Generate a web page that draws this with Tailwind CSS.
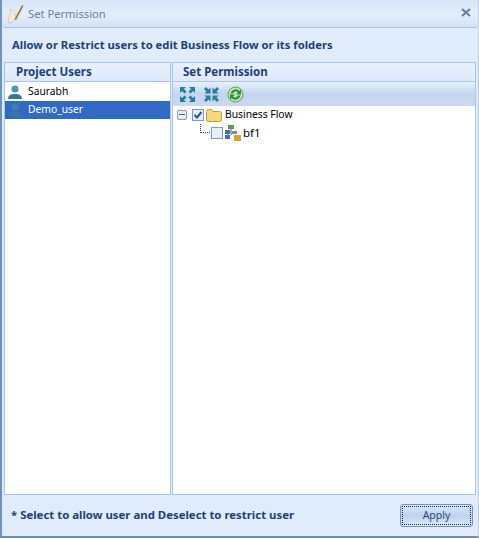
<!doctype html>
<html><head><meta charset="utf-8"><script src="https://cdn.jsdelivr.net/npm/@tailwindcss/browser@4"></script></head>
<body class="bg-white">
<div class="w-[479px] h-[539px] flex flex-col font-['Noto_Sans',sans-serif] bg-white overflow-hidden">
<div class="w-[479px] h-[538px] flex flex-col border-l-2 border-b-2 border-r-1 border-l-[#6d93c4] border-b-[#6f8db5] border-r-[#b9cde6] bg-[#dfeafa]">
  <div class="h-[27px] flex items-center bg-gradient-to-b from-[#d5e4f7] via-[#e4eefb] to-[#d4e3f6]">
    <svg class="ml-[5px] w-[19px] h-[22px]" viewBox="0 0 19 22"><path d="M3 6c3 1 6 5 6 9l-3 4 -4 1c-1-2-1-3 0-5 1-3 2-6 1-9z" fill="#f3ead8" stroke="#c4b59a" stroke-width=".6"/><path d="M16.500 3 L9 17 L7.500 16 L15 2Z" fill="#a87c34"/></svg>
    <span class="ml-[2px] text-[11.2px] text-[#6a7f9c] leading-none">Set Permission</span>
    <svg class="ml-auto mr-[7px] w-[10px] h-[9px] mb-[2px]" viewBox="0 0 10 9"><path d="M1 1l8 7M9 1l-8 7" stroke="#6a7fa2" stroke-width="2.200"/></svg>
  </div>
  <div class="flex-1 flex flex-col ml-[1px] mr-[1px] border-t border-[#abc3e0] bg-[#e0ebfb]">
    <div class="h-[34px] shrink-0 flex items-center pl-[9px] text-[11.25px] font-bold text-[#1e3f7a]">Allow or Restrict users to edit Business Flow or its folders</div>
    <div class="flex-1 flex gap-[1px] px-[1px] min-h-0">
      <div class="w-[167px] flex flex-col border border-[#a9c6ea] bg-white">
        <div class="h-[19px] flex items-center pl-[11px] text-[11.5px] font-bold text-[#1e3f7a] bg-gradient-to-b from-[#e9f1fc] to-[#dde9fa] border-b border-[#a9c6ea]">Project Users</div>
        <div class="pt-[1px] flex-1 bg-white">
          <div class="h-[18px] flex items-center text-[10.3px] text-black">
            <svg class="ml-[2px] w-[16px] h-[16px]" viewBox="0 0 16 16"><circle cx="8" cy="5" r="3.600" fill="#4b93b8"/><path d="M1 15c0-4 3-5 7-5s7 1 7 5z" fill="#35799c"/></svg>
            <span class="ml-[5px]">Saurabh</span>
          </div>
          <div class="h-[18px] flex items-center text-[10.3px] text-white bg-[#316ac5]">
            <svg class="ml-[2px] w-[16px] h-[16px]" viewBox="0 0 16 16"><circle cx="8" cy="5" r="3.600" fill="#3b85ab"/><path d="M1 15c0-4 3-5 7-5s7 1 7 5z" fill="#2f7a9e"/></svg>
            <span class="ml-[5px]">Demo_user</span>
          </div>
        </div>
      </div>
      <div class="flex-1 flex flex-col border border-[#a9c6ea] bg-white">
        <div class="h-[19px] flex items-center pl-[10px] text-[11.5px] font-bold text-[#1e3f7a] bg-gradient-to-b from-[#e9f1fc] to-[#dde9fa] border-b border-[#a9c6ea]">Set Permission</div>
        <div class="h-[24px] flex items-center pl-[6px] gap-[7px] bg-gradient-to-b from-[#e8f0fb] via-[#c3d6ee] to-[#c9daf0]">
          <svg class="w-[17px] h-[17px]" viewBox="0 0 17 17" fill="#2a7c9c"><path d="M1 1h6L5 3l2.500 2.500-2 2L3 5 1 7zM16 1v6l-2-2-2.500 2.500-2-2L12 3l-2-2zM1 16v-6l2 2 2.500-2.500 2 2L5 14l2 2zM16 16h-6l2-2-2.500-2.500 2-2L14 12l2-2z"/></svg>
          <svg class="w-[17px] h-[17px]" viewBox="0 0 17 17" fill="#2a7c9c"><path d="M7.500 7.500h-6l2-2L1 3l2-2 2.500 2.500 2-2zM9.500 7.500v-6l2 2L14 1l2 2-2.500 2.500 2 2zM7.500 9.500v6l-2-2L3 16l-2-2 2.500-2.500-2-2zM9.500 9.500h6l-2 2L16 14l-2 2-2.500-2.500-2 2z"/></svg>
          <svg class="w-[17px] h-[17px]" viewBox="0 0 17 17"><circle cx="8.500" cy="8.500" r="7.500" fill="#c4e6b4" stroke="#4fa648"/><path d="M3.500 7.500A5.200 5.200 0 0 1 12.500 5L14 3.500V8.500H9L11 6.500A3 3 0 0 0 6 7.500z" fill="#2f8f35"/><path d="M13.500 9.500A5.200 5.200 0 0 1 4.500 12L3 13.500V8.500H8L6 10.500A3 3 0 0 0 11 9.500z" fill="#2f8f35"/></svg>
        </div>
        <div class="flex-1 bg-white">
          <div class="h-[18px] flex items-center text-[10.3px] text-black">
            <div class="ml-[4px] w-[10px] h-[10px] border border-[#8c99a8] rounded-[2px] bg-[#e9edf2] relative"><div class="absolute left-[1px] right-[1px] top-[3px] h-[1px] bg-[#51617a]"></div></div>
            <div class="ml-[5px] w-[12px] h-[12px] border border-[#7f9db9] bg-[#e6eefa] flex items-center justify-center"><svg class="w-[10px] h-[10px]" viewBox="0 0 10 10"><path d="M1.500 5l2.500 2.500L8.500 2" fill="none" stroke="#2a4fa8" stroke-width="2"/></svg></div>
            <svg class="ml-[2px] w-[16px] h-[14px]" viewBox="0 0 16 14"><path d="M.5 3.500a2 2 0 0 1 2-2h3l1.500 2h6.500a2 2 0 0 1 2 2v6a2 2 0 0 1-2 2h-11a2 2 0 0 1-2-2z" fill="#f8d97a" stroke="#b99a4a"/></svg>
            <span class="ml-[3px]">Business Flow</span>
          </div>
          <div class="h-[17px] flex items-center text-[11px] text-black">
            <div class="ml-[27px] w-[10px] h-[9px] border-l border-b border-dotted border-[#444] -mt-[9px]"></div>
            <div class="ml-[1px] w-[12px] h-[12px] border border-[#7f9db9] bg-[#e6eefa]"></div>
            <svg class="ml-[2px] w-[16px] h-[16px]" viewBox="0 0 16 16"><rect x="3" y="0" width="6" height="4" fill="#5a9a4a"/><rect x="0" y="5" width="5" height="4" fill="#3f6fb0"/><rect x="0" y="10" width="5" height="4" fill="#3f6fb0"/><rect x="7" y="6" width="5" height="3" fill="#7a8aa0"/><rect x="9" y="10" width="7" height="6" fill="#e0a030"/><path d="M6 4v6M3 9v1" stroke="#555"/></svg>
            <span class="ml-[2px] text-[11.5px]">bf1</span>
          </div>
        </div>
      </div>
    </div>
    <div class="h-[41px] shrink-0 flex items-center justify-between pl-[8px] pr-[4px] text-[11.4px] font-bold text-[#1e3f7a]">
      <span class="mb-[2px]">* Select to allow user and Deselect to restrict user</span>
      <button class="w-[73px] h-[23px] border border-[#6b95c8] rounded-[3px] p-[1px] bg-gradient-to-b from-[#dbe8f8] via-[#bcd3ee] to-[#dcecfb]">
        <span class="h-full border border-dotted border-[#223] flex items-center justify-center text-[10.5px] font-normal text-[#2a4a78]">Apply</span>
      </button>
    </div>
  </div>
</div>
</div>
</body></html>
